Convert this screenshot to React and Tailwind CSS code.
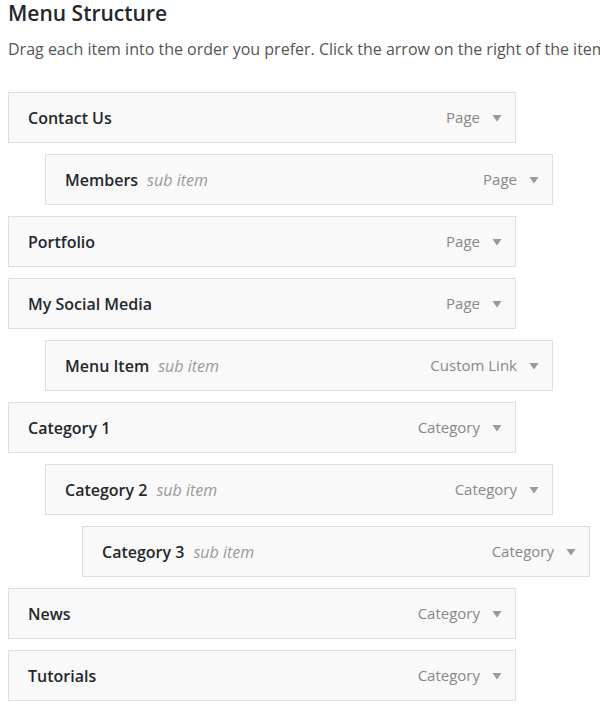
import React from 'react';

const items = [
  { title: 'Contact Us', type: 'Page', depth: 0 },
  { title: 'Members', type: 'Page', depth: 1 },
  { title: 'Portfolio', type: 'Page', depth: 0 },
  { title: 'My Social Media', type: 'Page', depth: 0 },
  { title: 'Menu Item', type: 'Custom Link', depth: 1 },
  { title: 'Category 1', type: 'Category', depth: 0 },
  { title: 'Category 2', type: 'Category', depth: 1 },
  { title: 'Category 3', type: 'Category', depth: 2 },
  { title: 'News', type: 'Category', depth: 0 },
  { title: 'Tutorials', type: 'Category', depth: 0 },
];

const indent = ['ml-0', 'ml-[37px]', 'ml-[74px]'];

const MenuItem = ({ item }) => (
  <div
    className={`${indent[item.depth]} w-[508px] h-[51px] mb-[11px] flex items-center justify-between bg-[#f9f9f9] border border-[#dfdfdf] pl-[19px] pr-[13px]`}
  >
    <div className="flex items-baseline gap-[9px]">
      <span className="text-[16px] font-semibold text-[#23282d]">{item.title}</span>
      {item.depth > 0 && (
        <span className="text-[16px] italic text-[#999]">sub item</span>
      )}
    </div>
    <div className="flex items-center gap-[12px]">
      <span className="text-[15px] text-[#888]">{item.type}</span>
      <svg width="10" height="8" viewBox="0 0 10 8">
        <path d="M0.5 1 L9.5 1 L5 7.5 Z" fill="#999" />
      </svg>
    </div>
  </div>
);

const App = () => {
  return (
    <div
      className="w-[600px] h-[708px] overflow-hidden bg-white pl-[8px]"
      style={{ fontFamily: '"Open Sans", "Noto Sans", sans-serif' }}
    >
      <h2 className="text-[21px] leading-[26px] font-semibold text-[#23282d]">Menu Structure</h2>
      <p className="mt-[11px] text-[16px] leading-[24px] text-[#555] whitespace-nowrap">
        Drag each item into the order you prefer. Click the arrow on the right of the item
      </p>
      <div className="mt-[31px]">
        {items.map((item) => (
          <MenuItem key={item.title} item={item} />
        ))}
      </div>
    </div>
  );
};

export default App;
